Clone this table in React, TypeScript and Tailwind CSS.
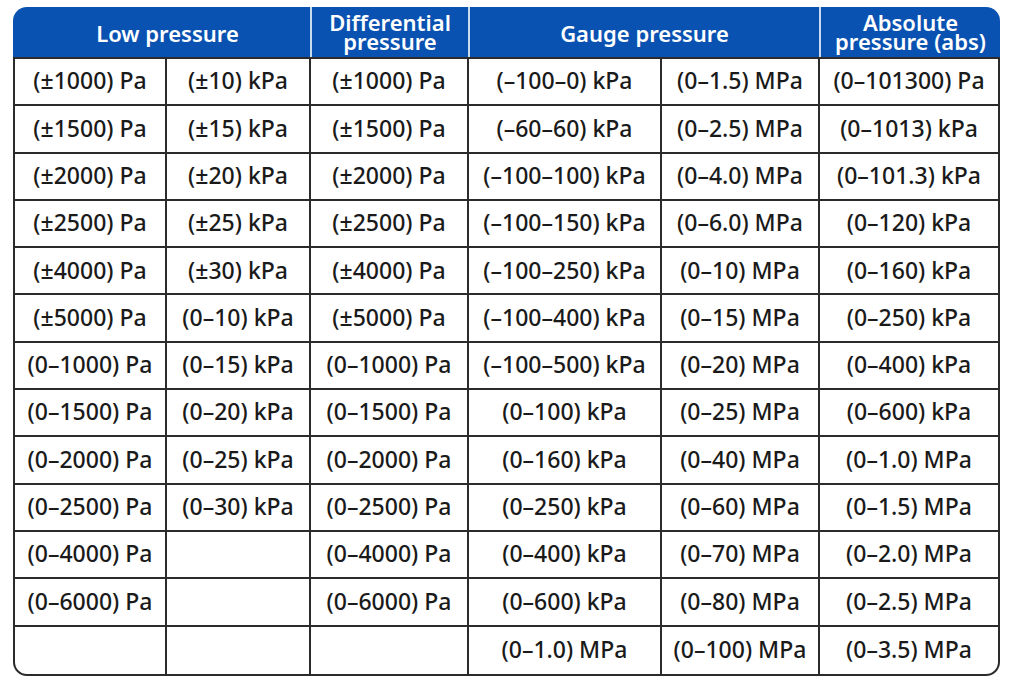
import React from 'react';

const cols = ['w-[152px]', 'w-[144px]', 'w-[158px]', 'w-[193px]', 'w-[158px]', 'w-[181px]'];

const rows: string[][] = [
  ['(±1000) Pa', '(±10) kPa', '(±1000) Pa', '(–100–0) kPa', '(0–1.5) MPa', '(0–101300) Pa'],
  ['(±1500) Pa', '(±15) kPa', '(±1500) Pa', '(–60–60) kPa', '(0–2.5) MPa', '(0–1013) kPa'],
  ['(±2000) Pa', '(±20) kPa', '(±2000) Pa', '(–100–100) kPa', '(0–4.0) MPa', '(0–101.3) kPa'],
  ['(±2500) Pa', '(±25) kPa', '(±2500) Pa', '(–100–150) kPa', '(0–6.0) MPa', '(0–120) kPa'],
  ['(±4000) Pa', '(±30) kPa', '(±4000) Pa', '(–100–250) kPa', '(0–10) MPa', '(0–160) kPa'],
  ['(±5000) Pa', '(0–10) kPa', '(±5000) Pa', '(–100–400) kPa', '(0–15) MPa', '(0–250) kPa'],
  ['(0–1000) Pa', '(0–15) kPa', '(0–1000) Pa', '(–100–500) kPa', '(0–20) MPa', '(0–400) kPa'],
  ['(0–1500) Pa', '(0–20) kPa', '(0–1500) Pa', '(0–100) kPa', '(0–25) MPa', '(0–600) kPa'],
  ['(0–2000) Pa', '(0–25) kPa', '(0–2000) Pa', '(0–160) kPa', '(0–40) MPa', '(0–1.0) MPa'],
  ['(0–2500) Pa', '(0–30) kPa', '(0–2500) Pa', '(0–250) kPa', '(0–60) MPa', '(0–1.5) MPa'],
  ['(0–4000) Pa', '', '(0–4000) Pa', '(0–400) kPa', '(0–70) MPa', '(0–2.0) MPa'],
  ['(0–6000) Pa', '', '(0–6000) Pa', '(0–600) kPa', '(0–80) MPa', '(0–2.5) MPa'],
  ['', '', '', '(0–1.0) MPa', '(0–100) MPa', '(0–3.5) MPa'],
];

export default function App() {
  return (
    <div className="w-[1012px] h-[684px] bg-white pl-[13px] pt-[7px] font-['Noto_Sans',sans-serif]">
      <div className="w-[987px]">
        {/* header */}
        <div className="flex h-[50px] rounded-t-[14px] bg-[#0a52b2] text-white font-semibold text-[22px] overflow-hidden">
          <div className="w-[297px] flex items-center justify-center pt-[2px] pl-[12px]">Low pressure</div>
          <div className="w-[158px] flex flex-col items-center justify-center text-center leading-[19px] border-l-2 border-[#c9dbee]">
            <span>Differential</span>
            <span>pressure</span>
          </div>
          <div className="w-[351px] flex items-center justify-center pt-[2px] border-l-2 border-[#c9dbee]">
            Gauge pressure
          </div>
          <div className="flex-1 flex flex-col items-center justify-center text-center leading-[19px] border-l-2 border-[#c9dbee]">
            <span>Absolute</span>
            <span>pressure (abs)</span>
          </div>
        </div>
        {/* body */}
        <div className="border-2 border-[#2b2b2b] rounded-b-[14px] overflow-hidden text-[23px] font-medium text-[#1a1a1a]">
          {rows.map((row, r) => (
            <div
              key={r}
              className={`flex h-[47.3px] ${r < rows.length - 1 ? 'border-b-2 border-[#2b2b2b]' : ''}`}
            >
              {row.map((cell, c) => (
                <div
                  key={c}
                  className={`${cols[c]} ${c === 5 ? 'flex-1' : 'border-r-2 border-[#2b2b2b]'} flex items-center justify-center whitespace-nowrap pb-[2px]`}
                >
                  {cell}
                </div>
              ))}
            </div>
          ))}
        </div>
      </div>
    </div>
  );
}
